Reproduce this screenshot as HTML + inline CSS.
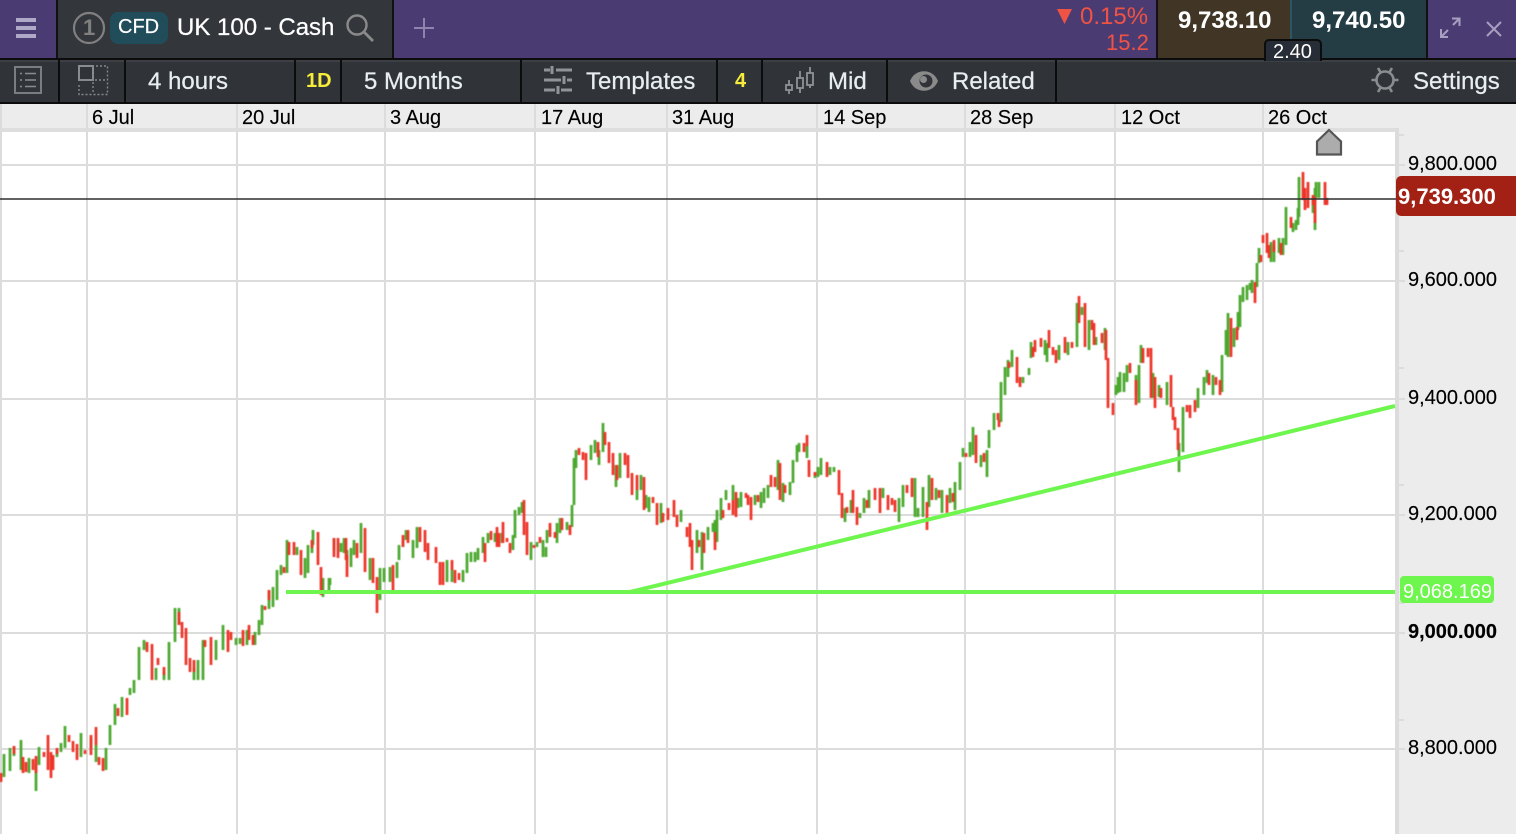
<!DOCTYPE html>
<html><head><meta charset="utf-8"><title>UK 100 - Cash</title>
<style>
html,body{margin:0;padding:0;background:#fff}
#p{position:relative;width:1516px;height:834px;overflow:hidden;font-family:"Liberation Sans",sans-serif;background:#fff}
.b{position:absolute}
.t{position:absolute;white-space:nowrap;line-height:1}
.tb{color:#e6eef0;font-size:24px;top:70px;-webkit-text-stroke:.25px #e6eef0}
.d{color:#000;font-size:20px;top:108px;-webkit-text-stroke:.15px #000}
.a{color:#000;font-size:20px;left:1408px;-webkit-text-stroke:.15px #000}
.s{position:absolute;top:60px;width:2px;height:42px;background:#0c0c0c}
.y{color:#f7ec3a;font-weight:bold;font-size:20px;top:71px}
svg{position:absolute;left:0;top:0}
</style></head><body><div id="p">
<div class="b" style="left:0;top:0;width:1516px;height:58px;background:#4b3b73"></div>
<div class="b" style="left:56px;top:0;width:2px;height:58px;background:#111"></div>
<div class="b" style="left:58px;top:0;width:334px;height:58px;background:#33363b"></div>
<div class="b" style="left:392px;top:0;width:2px;height:58px;background:#111"></div>
<div class="b" style="left:1156px;top:0;width:2px;height:58px;background:#111"></div>
<div class="b" style="left:1158px;top:0;width:132px;height:58px;background:#413626"></div>
<div class="b" style="left:1290px;top:0;width:2px;height:58px;background:#2f5560"></div>
<div class="b" style="left:1292px;top:0;width:134px;height:58px;background:#243d45"></div>
<div class="b" style="left:1426px;top:0;width:2px;height:58px;background:#111"></div>
<div class="b" style="left:0;top:58px;width:1516px;height:2px;background:#0c0c0c"></div>
<div class="b" style="left:0;top:60px;width:1516px;height:42px;background:#303338"></div>
<div class="b" style="left:0;top:60px;width:1516px;height:2px;background:#3c3f44"></div>
<div class="b" style="left:0;top:102px;width:1516px;height:2px;background:#0c0c0c"></div>
<div class="s" style="left:58px"></div><div class="s" style="left:124px"></div><div class="s" style="left:294px"></div><div class="s" style="left:340px"></div><div class="s" style="left:520px"></div><div class="s" style="left:716px"></div><div class="s" style="left:761px"></div><div class="s" style="left:886px"></div><div class="s" style="left:1055px"></div>
<div class="b" style="left:0;top:104px;width:1516px;height:24px;background:#ececec"></div>
<div class="b" style="left:0;top:128px;width:1395px;height:4px;background:#dedede"></div>
<div class="b" style="left:1399px;top:128px;width:117px;height:706px;background:#ececec"></div>
<div class="b" style="left:1395px;top:128px;width:4px;height:706px;background:#dcdcdc"></div>

<svg width="1516" height="834" viewBox="0 0 1516 834" fill="none">
<g stroke="#dcdcdc" stroke-width="2">
<path d="M1 104V834M87 104V834M237 104V834M385 104V834M535 104V834M667 104V834M817 104V834M965 104V834M1115 104V834M1263 104V834"/>
<path d="M0 165H1405M0 281H1405M0 399H1405M0 515H1405M0 633H1405M0 749H1405M1399 135H1404M1399 251H1404M1399 368H1404M1399 485H1404M1399 603H1404M1399 720H1404"/>
</g>
<g stroke="#b0a8c8" stroke-width="4"><path d="M16 20H36M16 28H36M16 36H36"/></g>
<circle cx="89" cy="28" r="15" stroke="#808080" stroke-width="2.200"/>
<circle cx="357" cy="25" r="9.500" stroke="#8a8a8a" stroke-width="2.400"/><path d="M364 32L373 41" stroke="#8a8a8a" stroke-width="2.800"/>
<path d="M424 18V38M414 28H434" stroke="#8f84ad" stroke-width="2"/>
<path d="M1057 9H1072L1064.500 24Z" fill="#ef5343"/>
<path d="M1441 37L1448 30M1453 25L1459 19M1452 18.500H1459.500V26M1448 37H1441V29" stroke="#a79fc0" stroke-width="2"/>
<path d="M1487 22L1501 36M1501 22L1487 36" stroke="#a79fc0" stroke-width="2"/>
<rect x="15" y="67" width="26" height="26" stroke="#7b7e81" stroke-width="2"/>
<path d="M20 73.500H22M25 73.500H36M20 80H22M25 80H36M20 86.500H22M25 86.500H36" stroke="#8a8d90" stroke-width="1.600"/>
<rect x="79" y="66" width="14" height="14" stroke="#8a8d90" stroke-width="2"/>
<path d="M96 66H107.500V94.500H79V83M93 66V94M79 80H107" stroke="#85888b" stroke-width="1.400" stroke-dasharray="2 2"/>
<path d="M544 70H550M556 70H572M544 80H561M567 80H572M544 90H555M561 90H572" stroke="#919497" stroke-width="3"/>
<path d="M552 66V74M564 76V84M558 86V94" stroke="#919497" stroke-width="3"/>
<g stroke="#8f9295" stroke-width="1.800"><rect x="786" y="85" width="6" height="5"/><path d="M789 80V85M789 90V94"/><rect x="797" y="78" width="6" height="10"/><path d="M800 71V78M800 88V93"/><rect x="807" y="73" width="6" height="12"/><path d="M810 67V73M810 85V88"/></g>
<path d="M910 81C915 68 933 68 938 81C933 94 915 94 910 81Z" fill="#8a8a8a"/><circle cx="926" cy="81" r="6.500" fill="#303338"/><circle cx="923.500" cy="79.500" r="3.500" fill="#8a8a8a"/>
<g stroke="#8a8d8f" stroke-width="2.600"><circle cx="1385" cy="80" r="8.500"/><path d="M1371.500 80H1376M1394 80H1398.500M1378 68L1381 73M1392 68L1389 73M1378 92L1381 87M1392 92L1389 87"/></g>
<path d="M1317 154.500V141.500L1329 130L1341 141.500V154.500Z" fill="#acacac" stroke="#555" stroke-width="2.200"/>
<g style="filter:blur(.4px)" stroke-width="2.700">
<path stroke="#4aa82d" d="M4 754V777M10 748V771M14 746V756M21 740V770M29 758V773M36 765V791M39 747V765M57 750V757M61 743V752M65 726V748M81 733V757M91 738V748M96 745V762M106 748V770M110 725V745M115 704V725M122 697V717M130 688V695M134 680V693M139 647V680M144 640V650M156 668V680M164 672V680M169 642V680M175 608V642M179 608V625M194 668V680M198 660V680M203 640V680M216 640V660M223 625V650M236 638V645M240 638V644M247 630V645M255 632V645M259 620V635M262 605V625M269 590V609M273 587V607M277 570V600M281 565V575M287 540V573M297 547V555M305 558V578M308 545V573M312 540V553M313 530V545M323 578V597M329 578V592M330 578V585M334 538V550M341 543V552M344 538V553M347 550V560M351 548V567M354 540V555M361 523V553M370 558V580M380 568V600M384 568V582M390 567V582M397 562V578M399 545V560M403 540V547M406 530V540M413 540V558M417 527V548M447 560V582M452 570V582M463 570V582M467 553V573M471 552V562M475 552V562M478 548V560M483 537V553M488 533V543M495 533V542M502 533V543M513 535V550M515 510V538M519 507V515M522 502V513M531 542V560M537 542V547M543 540V557M546 547V557M547 530V543M557 523V543M560 518V533M567 522V530M572 505V527M574 458V505M576 450V468M591 445V460M595 440V453M599 450V465M603 423V452M616 465V487M620 453V478M637 490V500M641 475V490M646 495V508M649 497V512M661 503V523M681 510V522M697 530V553M702 532V570M708 527V540M713 523V532M715 520V540M717 510V542M721 498V520M726 490V500M733 485V500M738 498V508M741 492V507M755 495V505M761 492V508M764 488V503M768 485V498M778 460V490M783 483V502M790 482V495M793 460V483M797 445V462M799 443V452M807 445V458M815 472V478M818 467V477M821 458V475M830 467V475M834 467V472M845 508V522M851 500V513M860 513V518M864 498V513M869 490V508M883 488V498M899 498V522M903 485V507M915 478V517M918 508V517M923 487V517M929 475V507M936 488V500M942 490V513M950 488V503M955 482V510M960 462V490M963 448V457M970 442V457M973 427V455M981 455V467M987 450V477M989 430V448M994 413V430M1001 382V422M1005 367V395M1008 360V377M1012 350V367M1023 377V383M1029 368V375M1031 342V358M1045 340V355M1047 343V362M1059 345V360M1068 342V355M1077 303V347M1082 307V315M1089 320V350M1096 337V345M1105 328V350M1116 385V395M1118 377V393M1120 372V392M1124 373V392M1127 365V382M1136 375V395M1139 365V403M1141 345V363M1153 373V398M1159 385V397M1167 382V405M1179 443V472M1183 407V452M1198 388V408M1204 377V395M1207 370V383M1213 375V395M1222 355V392M1226 330V355M1228 313V357M1234 328V347M1238 312V330M1240 295V327M1243 287V302M1247 285V300M1250 283V290M1252 280V293M1257 263V287M1259 248V263M1271 242V262M1274 245V262M1279 238V253M1283 238V255M1286 207V245M1293 223V232M1296 220V230M1298 208V225M1299 177V217M1313 197V213M1315 188V230M1316 182V198M1319 182V198"/>
<path stroke="#ee3328" d="M1 773V782M14 746V754M23 757V773M26 762V772M33 759V770M36 756V773M44 752V757M48 735V770M51 752V778M53 755V770M57 748V754M69 735V742M73 741V752M77 744V760M85 750V754M91 735V755M96 727V745M99 757V765M103 758V771M118 708V716M127 698V715M147 642V652M152 644V680M158 658V665M164 667V675M179 612V625M182 622V638M186 628V665M190 658V672M194 660V672M205 640V647M211 637V665M228 630V652M231 632V640M243 630V646M249 625V640M253 635V645M265 606V610M269 590V600M284 567V573M289 542V555M294 542V555M301 550V575M312 540V548M318 532V565M321 567V595M334 538V557M338 538V558M346 538V560M347 555V577M357 543V558M365 528V572M373 558V583M377 577V613M393 565V593M403 535V547M408 530V543M420 527V542M425 530V552M428 543V560M436 547V563M440 562V585M443 562V585M452 560V570M455 570V583M459 573V580M485 543V562M491 531V540M497 527V547M499 533V547M503 522V543M507 538V542M510 543V553M524 500V535M527 522V555M534 545V548M540 537V543M550 523V537M555 532V538M562 518V530M570 525V535M579 448V455M583 452V460M586 453V480M598 442V457M605 432V445M609 442V463M613 453V475M617 465V480M625 453V465M628 455V478M632 473V495M637 475V490M644 477V510M653 497V503M657 503V525M663 513V522M668 508V520M674 500V517M677 515V527M687 527V537M690 523V547M692 540V570M699 540V547M704 533V553M715 532V550M723 510V518M729 503V510M733 500V515M736 492V517M746 493V498M748 495V505M751 497V520M758 495V502M771 475V487M775 477V487M780 463V500M785 485V493M804 443V452M807 435V446M809 460V477M815 472V476M827 462V477M839 470V495M842 493V518M847 507V513M853 490V513M857 507V525M867 500V508M875 488V500M880 488V513M888 495V510M892 498V505M895 500V512M907 485V493M912 478V497M927 502V530M932 478V500M939 490V498M947 495V513M953 493V502M966 453V457M976 435V463M984 453V462M998 413V420M999 420V427M1009 362V368M1017 357V383M1020 377V387M1033 347V357M1035 340V352M1041 338V347M1049 330V348M1053 347V355M1056 350V363M1065 337V353M1072 342V348M1079 296V323M1085 303V347M1092 320V330M1094 323V345M1102 333V343M1106 330V360M1108 358V408M1113 403V415M1130 363V373M1136 380V405M1143 348V363M1148 348V357M1151 348V398M1155 377V408M1161 388V398M1171 375V407M1173 407V420M1175 417V430M1178 428V450M1187 405V412M1190 405V418M1195 400V412M1209 373V385M1216 377V385M1220 380V395M1231 318V357M1237 327V340M1255 282V303M1261 255V262M1263 235V243M1267 233V253M1269 245V258M1274 240V252M1281 243V255M1291 217V228M1303 172V200M1305 188V210M1308 182V208M1313 195V205M1315 197V223M1325 182V205M1327 198V205"/>
</g>
<path d="M0 199H1396" stroke="#2e2e2e" stroke-width="1.600"/>
<path d="M286 592H1395" stroke="#6ef54e" stroke-width="4"/>
<path d="M630 592L1395 406" stroke="#6ef54e" stroke-width="4"/>
</svg>

<div class="b" style="left:110px;top:12px;width:58px;height:32px;border-radius:8px;background:#214d5a"></div>
<div class="t" style="left:83px;top:17px;font-size:22px;font-weight:bold;color:#808080">1</div>
<div class="t" style="left:118px;top:17px;font-size:20px;color:#fff;-webkit-text-stroke:.2px #fff">CFD</div>
<div class="t" style="left:177px;top:16px;font-size:24px;color:#fff;-webkit-text-stroke:.25px #fff">UK 100 - Cash</div>
<div class="t" style="left:1080px;top:5px;font-size:24px;color:#ef5343">0.15%</div>
<div class="t" style="left:1106px;top:32px;font-size:22px;color:#ef5343">15.2</div>
<div class="t" style="left:1178px;top:9px;font-size:24px;font-weight:bold;color:#fff">9,738.10</div>
<div class="t" style="left:1312px;top:9px;font-size:24px;font-weight:bold;color:#fff">9,740.50</div>
<div class="b" style="left:1264px;top:39px;width:54px;height:20px;background:#262d36;border:2px solid #0c0c0c;border-bottom:0;border-radius:5px 5px 0 0"></div>
<div class="t" style="left:1273px;top:42px;font-size:20px;color:#fff">2.40</div>

<div class="t tb" style="left:148px">4 hours</div>
<div class="t y" style="left:306px">1D</div>
<div class="t tb" style="left:364px">5 Months</div>
<div class="t tb" style="left:586px">Templates</div>
<div class="t y" style="left:735px">4</div>
<div class="t tb" style="left:828px">Mid</div>
<div class="t tb" style="left:952px">Related</div>
<div class="t tb" style="left:1413px">Settings</div>

<div class="t d" style="left:92px">6 Jul</div>
<div class="t d" style="left:242px">20 Jul</div>
<div class="t d" style="left:390px">3 Aug</div>
<div class="t d" style="left:541px">17 Aug</div>
<div class="t d" style="left:672px">31 Aug</div>
<div class="t d" style="left:823px">14 Sep</div>
<div class="t d" style="left:970px">28 Sep</div>
<div class="t d" style="left:1121px">12 Oct</div>
<div class="t d" style="left:1268px">26 Oct</div>

<div class="t a" style="top:154px">9,800.000</div>
<div class="t a" style="top:270px">9,600.000</div>
<div class="t a" style="top:388px">9,400.000</div>
<div class="t a" style="top:504px">9,200.000</div>
<div class="t a" style="top:622px;font-weight:bold">9,000.000</div>
<div class="t a" style="top:738px">8,800.000</div>

<div class="b" style="left:1396px;top:176px;width:120px;height:40px;background:#a32015;border-radius:5px 0 0 5px"></div>
<div class="t" style="left:1398px;top:186px;font-size:22px;font-weight:bold;color:#fff">9,739.300</div>
<div class="b" style="left:1400px;top:576px;width:94px;height:27px;background:#6ef54e;border-radius:4px"></div>
<div class="t" style="left:1403px;top:582px;font-size:20px;color:#fff">9,068.169</div>
</div></body></html>
